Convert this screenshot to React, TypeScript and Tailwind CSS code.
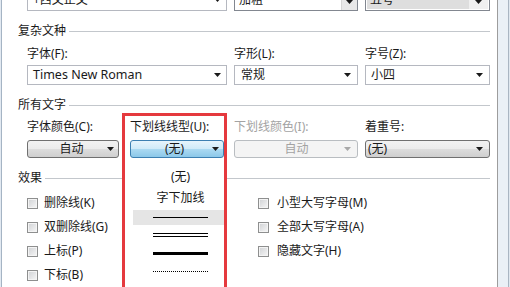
import React from "react";

const Arrow = ({ className = "" }: { className?: string }) => (
  <svg width="7" height="4" viewBox="0 0 7 4" className={className}>
    <path d="M0 0h7L3.5 4z" fill="currentColor" />
  </svg>
);

const Header = ({ title }: { title: string }) => (
  <div className="flex items-center h-[16px] pl-[16px] pr-[7px]">
    <span className="leading-[16px]">{title}</span>
    <div className="flex-1 h-px bg-[#c3c7cc] ml-[3px]" />
  </div>
);

const Check = ({ label, gap }: { label: string; gap: string }) => (
  <div className={`flex items-center h-[24px] ${gap}`}>
    <span className="w-[11px] h-[11px] border border-[#8e8f8f] bg-gradient-to-br from-[#cfd1d4] to-[#f7f7f7] shadow-[inset_0_0_0_1px_#f4f4f4]" />
    <span className="leading-[16px]">{label}</span>
  </div>
);

const greyBtn =
  "bg-[linear-gradient(to_bottom,#f2f2f2_0%,#ebebeb_50%,#dddddd_50%,#cfcfcf_100%)] border border-[#707070] rounded-[3px]";

const App = (): JSX.Element => {
  return (
    <div className="w-[510px] h-[287px] overflow-hidden flex bg-white text-[12px] text-[#1a1a1a] font-['Noto_Sans','Noto_Sans_CJK_SC',sans-serif]">
      <div className="w-px bg-[#e2e9f1]" />
      <div className="w-px bg-[#a5b4c4]" />

      <div className="relative flex-1 flex flex-col">
        {/* list boxes cut by the top edge */}
        <div className="flex mt-[-11px] h-[22px] pl-[25px] shrink-0">
          <div className="w-[200px] h-full border border-[#b5b8c0] bg-white flex items-center pl-[5px] pr-[5px]">
            <span className="flex-1 leading-[16px]">+西文正文</span>
            <Arrow />
          </div>
          <div className="ml-[7px] w-[124px] h-full border border-[#828790] flex">
            <span className="flex-1 pl-[4px] flex items-center leading-[16px]">加粗</span>
            <div className="w-[16px] bg-[#e8e8e8] border-l border-[#d6d6d6] flex justify-center items-start pt-[10px]">
              <Arrow />
            </div>
          </div>
          <div className="ml-[7px] w-[125px] h-full border border-[#828790] flex p-px">
            <span className="flex-1 pl-[3px] flex items-center bg-[#dedede] leading-[16px]">五号</span>
            <div className="w-[19px] bg-[#f0f0f0] flex justify-center items-start pt-[9px]">
              <Arrow />
            </div>
          </div>
        </div>

        <div className="mt-[12px]">
          <Header title="复杂文种" />
        </div>

        <div className="flex mt-[7px] h-[16px] items-center pl-[25px] leading-[16px]">
          <span className="w-[207px]">字体(F):</span>
          <span className="w-[131px]">字形(L):</span>
          <span>字号(Z):</span>
        </div>

        <div className="flex mt-[3px] h-[22px] pl-[25px]">
          <div className="w-[200px] border border-[#b5b8c0] flex items-center pl-[5px] pr-[5px]">
            <span className="flex-1 text-[12.5px] leading-[18px]">Times New Roman</span>
            <Arrow />
          </div>
          <div className="ml-[7px] w-[124px] border border-[#b5b8c0] flex items-center pl-[6px] pr-[6px]">
            <span className="flex-1 leading-[16px]">常规</span>
            <Arrow />
          </div>
          <div className="ml-[7px] w-[125px] border border-[#b5b8c0] flex items-center pl-[5px] pr-[6px]">
            <span className="flex-1 leading-[16px]">小四</span>
            <Arrow />
          </div>
        </div>

        <div className="mt-[12px]">
          <Header title="所有文字" />
        </div>

        <div className="flex mt-[6px] h-[16px] items-center pl-[25px] leading-[16px]">
          <span className="w-[103px]">字体颜色(C):</span>
          <span className="w-[104px]">下划线线型(U):</span>
          <span className="w-[131px] text-[#a3a3a3]">下划线颜色(I):</span>
          <span>着重号:</span>
        </div>

        <div className="flex mt-[5px] h-[21px] pl-[25px]">
          <div className={`w-[92px] flex items-center pr-[4px] ${greyBtn}`}>
            <span className="flex-1 text-center pl-[8px] leading-[16px]">自动</span>
            <Arrow />
          </div>
          <div className="ml-[11px] w-[94px] flex items-center pr-[4px] border border-[#3c7fb1] rounded-[3px] bg-[linear-gradient(to_bottom,#e6f4fc_0%,#cfeaf8_50%,#acdaf2_50%,#8cc8e9_100%)]">
            <span className="flex-1 text-center pl-[6px] leading-[16px]">(无)</span>
            <Arrow />
          </div>
          <div className="ml-[10px] w-[124px] flex items-center pr-[6px] border border-[#b9bdc1] rounded-[3px] bg-[#f4f4f4] text-[#a3a3a3]">
            <span className="flex-1 text-center pl-[14px] leading-[16px]">自动</span>
            <Arrow className="text-[#a8a8a8]" />
          </div>
          <div className={`ml-[7px] w-[125px] flex items-center pl-[2px] pr-[6px] ${greyBtn}`}>
            <span className="flex-1 leading-[16px]">(无)</span>
            <Arrow />
          </div>
        </div>

        <div className="mt-[12px]">
          <Header title="效果" />
        </div>

        <div className="mt-[5px] ml-[25px] grid grid-cols-[231px_auto]">
          <Check label="删除线(K)" gap="gap-[6px]" />
          <Check label="小型大写字母(M)" gap="gap-[8px]" />
          <Check label="双删除线(G)" gap="gap-[6px]" />
          <Check label="全部大写字母(A)" gap="gap-[8px]" />
          <Check label="上标(P)" gap="gap-[6px]" />
          <Check label="隐藏文字(H)" gap="gap-[8px]" />
          <Check label="下标(B)" gap="gap-[6px]" />
        </div>

        {/* open underline list */}
        <div className="absolute left-[123px] top-[163px] w-[99px] h-[130px] bg-white flex flex-col pt-[3px] pl-[8px]">
          <div className="h-[22px] flex items-center justify-center pl-[4px] leading-[16px]">(无)</div>
          <div className="h-[20px] flex items-center justify-center pl-[4px] leading-[16px]">字下加线</div>
          <div className="mt-[2px] h-[15px] bg-[#e5e5e5] flex items-center justify-center pl-[4px]">
            <div className="w-[55px] h-px bg-black" />
          </div>
          <div className="h-[19px] flex items-center justify-center pl-[4px]">
            <div className="w-[55px] h-[4px] border-t border-b border-black" />
          </div>
          <div className="h-[19px] flex items-center justify-center pl-[4px]">
            <div className="w-[55px] h-[3px] bg-black" />
          </div>
          <div className="h-[17px] flex items-center justify-center pl-[4px]">
            <div className="w-[55px] border-t border-dotted border-black" />
          </div>
        </div>

        {/* highlight frame */}
        <div className="absolute left-[120px] top-[113px] w-[105px] h-[190px] border-[3px] border-[#e5393e]" />
      </div>

      <div className="w-px bg-[#9d9d9d]" />
      <div className="w-[10px] bg-[#eaf0f6]" />
      <div className="w-px bg-[#a9b5c2]" />
      <div className="w-px bg-[#dfe7ef]" />
    </div>
  );
};

export default App;
